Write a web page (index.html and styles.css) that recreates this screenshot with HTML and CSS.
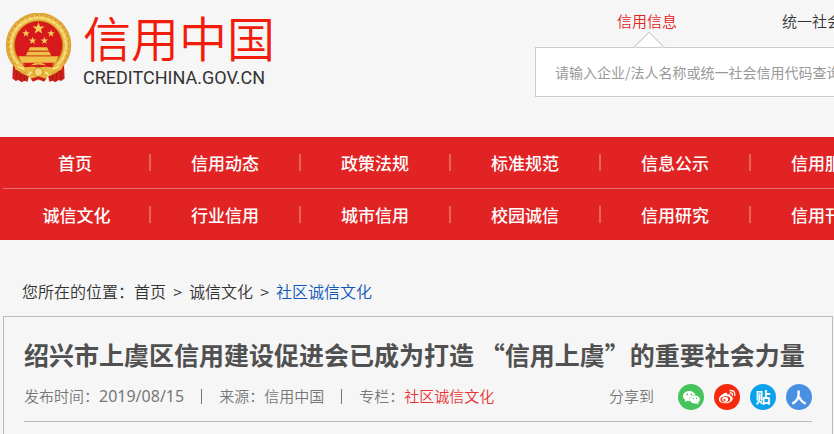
FILE: index.html
```html
<!DOCTYPE html>
<html lang="zh-CN">

<head>
    <meta charset="UTF-8">
    <meta name="viewport" content="width=device-width, initial-scale=1.0">
    <title>信用中国</title>
    <link rel="stylesheet" href="styles.css">
</head>

<body>
    <header class="header">
        <a href="#" class="logo">
            <svg class="emblem" viewBox="0 0 202 212" aria-hidden="true">
                <defs>
                    <radialGradient id="gold" cx="50%" cy="50%" r="50%">
                        <stop offset="70%" stop-color="#d99a1c" />
                        <stop offset="84%" stop-color="#f3cf62" />
                        <stop offset="100%" stop-color="#d89c2a" />
                    </radialGradient>
                    <path id="star" d="M0-10 2.4-3.2 9.5-3.1 3.8 1.2 5.9 8.1 0 4 -5.9 8.1 -3.8 1.2 -9.5-3.1 -2.4-3.2z" />
                </defs>
                <!-- drapes -->
                <path d="M24 150 22 198 32 206 40 203 50 210 58 205 68 208 74 180 128 180 134 208 144 205 152 210 162 203 170 206 180 198 178 150z" fill="#cf1f1b" />
                <path d="M34 165v36M46 170v34M58 174v30M144 174v30M156 170v34M168 165v36" stroke="#a81a16" stroke-width="3" />
                <!-- wheat ring -->
                <circle cx="101" cy="98" r="99" fill="url(#gold)" />
                <circle cx="101" cy="98" r="91" fill="none" stroke="#cf932a" stroke-width="4" stroke-dasharray="6 9" />
                <circle cx="101" cy="98" r="83" fill="none" stroke="#fbe08a" stroke-width="5" stroke-dasharray="12 6" />
                <circle cx="101" cy="98" r="73" fill="none" stroke="#c4861c" stroke-width="3" />
                <circle cx="101" cy="97" r="72" fill="#d8191b" />
                <g fill="#f5cd58">
                    <use href="#star" transform="translate(101 47) scale(1.9)" />
                    <use href="#star" transform="translate(63 62) scale(1.2)" />
                    <use href="#star" transform="translate(139 62) scale(1.2)" />
                    <use href="#star" transform="translate(83 84) scale(1.2)" />
                    <use href="#star" transform="translate(119 84) scale(1.2)" />
                </g>
                <!-- gate -->
                <path d="M75 104h52l5 10H70zM68 117h66l5 12H63zM40 131h122l-10 20H50z" fill="#f0c04a" />
                <path d="M72 115h58M64 130h74" stroke="#b97812" stroke-width="2" />
                <!-- gear and ribbon -->
                <path d="M28 150Q60 170 78 158 90 148 101 150 112 148 124 158 142 170 174 150L171 172Q148 180 138 176L142 186 128 192 124 204H78L74 192 60 186 64 176Q54 180 31 172z" fill="#e9b840" />
                <path d="M52 156Q84 160 101 156 118 160 150 156L142 164Q118 161 101 165 84 161 60 164z" fill="#cf1f1b" />
                <circle cx="101" cy="179" r="13" fill="#f6d777" stroke="#c4861c" stroke-width="3" />
                <path d="M70 188 80 178M132 188l-10-10M38 162l20 8M164 162l-20 8" stroke="#fff0ac" stroke-width="4" />
                <path d="M78 198 101 192 124 198 118 208 101 201 84 208z" fill="#cf1f1b" />
            </svg>
            <span class="logo-text">
                <span class="logo-name">信用中国</span>
                <span class="logo-domain">CREDITCHINA.GOV.CN</span>
            </span>
        </a>
        <form class="search">
            <div class="search-tabs">
                <a href="#" class="search-tab active">信用信息</a>
                <a href="#" class="search-tab">统一社会信用代码</a>
            </div>
            <input type="text" class="search-input" aria-label="信用信息" placeholder="请输入企业/法人名称或统一社会信用代码查询">
        </form>
    </header>

    <nav class="nav">
        <ul class="nav-row">
            <li><a href="#">首页</a></li>
            <li><a href="#">信用动态</a></li>
            <li><a href="#">政策法规</a></li>
            <li><a href="#">标准规范</a></li>
            <li><a href="#">信息公示</a></li>
            <li><a href="#">信用服务</a></li>
        </ul>
        <ul class="nav-row">
            <li><a href="#">诚信文化</a></li>
            <li><a href="#">行业信用</a></li>
            <li><a href="#">城市信用</a></li>
            <li><a href="#">校园诚信</a></li>
            <li><a href="#">信用研究</a></li>
            <li><a href="#">信用刊物</a></li>
        </ul>
    </nav>

    <div class="breadcrumb">
        <span>您所在的位置：</span><a href="#">首页</a>
        <span class="arrow">&gt;</span>
        <a href="#">诚信文化</a>
        <span class="arrow">&gt;</span>
        <a href="#" class="current">社区诚信文化</a>
    </div>

    <main class="article">
        <h1>绍兴市上虞区信用建设促进会已成为打造 “信用上虞”的重要社会力量</h1>
        <div class="article-info">
            <div class="meta">
                <span>发布时间：<time>2019/08/15</time></span>
                <span class="line"></span>
                <span>来源：信用中国</span>
                <span class="line"></span>
                <span>专栏：<a href="#">社区诚信文化</a></span>
            </div>
            <div class="share">
                <span class="share-label">分享到</span>
                <a href="#" aria-label="微信">
                    <svg viewBox="0 0 26 26">
                        <circle cx="13" cy="13" r="13" fill="#46c45c" />
                        <path d="M11.2 7C7.800 7 5 9.200 5 12c0 1.600.9 3 2.300 3.900L6.800 17.900l2.300-1.200c.7.200 1.400.3 2.100.3h.5c-.7-3.500 2.200-6 5.700-6C16.900 8.700 14.300 7 11.200 7z" fill="#fff" />
                        <path d="M16.900 11.600c-2.800 0-5 1.800-5 4s2.200 4 5 4c.6 0 1.200-.1 1.700-.2l1.900 1-.5-1.700c1.200-.7 1.900-1.800 1.900-3.100 0-2.200-2.200-4-5-4z" fill="#fff" />
                        <g fill="#46c45c">
                            <circle cx="9.100" cy="10.300" r=".9" />
                            <circle cx="13.300" cy="10.300" r=".9" />
                            <circle cx="15.200" cy="14.500" r=".7" />
                            <circle cx="18.600" cy="14.500" r=".7" />
                        </g>
                    </svg>
                </a>
                <a href="#" aria-label="微博">
                    <svg viewBox="0 0 26 26">
                        <circle cx="13" cy="13" r="13" fill="#f6290c" />
                        <path d="M10.800 9c1.600-.7 2.800-.1 2.400 1.600 1.900-.8 3.800-.6 3.200 1.400 1.600.5 2.500 1.400 2.400 2.700-.2 2.500-3.500 4.600-7.400 4.600-3.800 0-6.600-1.700-6.600-4.100C4.800 12.900 7.900 10.200 10.800 9z" fill="#fff" />
                        <ellipse cx="11.400" cy="15.300" rx="4.900" ry="3" fill="#f6290c" transform="rotate(-7 11.400 15.300)" />
                        <ellipse cx="11.200" cy="15.500" rx="3" ry="2.400" fill="#fff" />
                        <circle cx="10.500" cy="16" r="1.100" fill="#f6290c" />
                        <path d="M16 6.600c3.400-.6 5.600 2 4.700 5M16.200 9c1.600-.2 2.600.8 2.200 2.300" fill="none" stroke="#fff" stroke-width="1.300" stroke-linecap="round" />
                    </svg>
                </a>
                <a href="#" class="tieba">贴</a>
                <a href="#" aria-label="人人网">
                    <svg viewBox="0 0 26 26">
                        <circle cx="13" cy="13" r="13" fill="#4a90e2" />
                        <path d="M12.600 6.400V10C12.600 14.500 10 17.800 6.300 19.600M13 12.500c1.100 3.400 3.300 5.700 6.700 7.100" fill="none" stroke="#fff" stroke-width="2.400" />
                    </svg>
                </a>
            </div>
        </div>
    </main>
</body>

</html>
```
FILE: styles.css
```css
* {
    box-sizing: border-box;
}

body {
    margin: 0;
    font-family: "Noto Sans CJK SC", "Noto Sans", sans-serif;
    background: #f6f6f6;
    color: #333;
    overflow-x: hidden;
}

a {
    color: inherit;
    text-decoration: none;
}

/* header */
.header {
    display: flex;
    align-items: flex-start;
    height: 137px;
    padding-left: 5px;
    overflow: hidden;
}

.logo {
    display: flex;
    flex: none;
    gap: 11px;
    width: 530px;
    padding-top: 13px;
}

.emblem {
    width: 67px;
    height: 70px;
}

.logo-text {
    display: flex;
    flex-direction: column;
    gap: 8px;
}

.logo-name {
    font-size: 48px;
    font-weight: 350;
    line-height: 46px;
    color: #f21b0c;
}

.logo-domain {
    font-family: Roboto, sans-serif;
    font-size: 18px;
    line-height: 22px;
}

.search {
    flex: 0 0 600px;
}

.search-tabs {
    display: flex;
    gap: 105px;
    height: 47px;
    padding-left: 82px;
    font-size: 15px;
    font-weight: 350;
    line-height: 42px;
}

.search-tab {
    position: relative;
    white-space: nowrap;
}

.search-tab.active {
    color: #e22323;
}

.search-tab.active::after {
    content: "";
    position: absolute;
    left: 50%;
    bottom: -11px;
    width: 20px;
    height: 20px;
    margin-left: -9px;
    background: linear-gradient(135deg, #fff 50%, transparent 50%);
    border: 1px solid #ccc;
    border-right-color: transparent;
    border-bottom-color: transparent;
    transform: rotate(45deg);
    z-index: 1;
}

.search-input {
    display: block;
    width: 100%;
    height: 50px;
    padding: 0 19px;
    border: 1px solid #ccc;
    background: #fff;
    font-family: inherit;
    font-size: 14px;
    outline: none;
}

.search-input::placeholder {
    color: #999;
}

/* navigation */
.nav {
    background: #e22323;
    color: #fff;
    overflow: hidden;
}

.nav-row {
    display: flex;
    height: 51px;
    margin: 0;
    padding: 0;
    list-style: none;
}

.nav-row + .nav-row {
    height: 52px;
    margin-left: 3px;
    border-top: 1px solid #ec7070;
}

.nav-row li {
    display: flex;
    flex: 0 0 150px;
    align-items: center;
    justify-content: center;
    position: relative;
    font-size: 17px;
    font-weight: 500;
}

.nav-row + .nav-row li:first-child {
    flex-basis: 147px;
}

.nav-row li::after {
    content: "";
    position: absolute;
    right: -1px;
    width: 2px;
    height: 17px;
    background: #eb6450;
}

/* breadcrumb */
.breadcrumb {
    display: flex;
    height: 76px;
    padding: 28px 22px 0;
    font-size: 16px;
    font-weight: 350;
    line-height: 46px;
}

.arrow {
    width: 23px;
    text-align: center;
}

.current {
    color: #1058b8;
}

/* article */
.article {
    margin: 0 1px 0 3px;
    padding: 18px 20px 12px;
    border: 1px solid #bbb;
    border-bottom: none;
}

.article h1 {
    margin: 0;
    font-size: 25px;
    line-height: 38px;
    color: #505050;
    white-space: nowrap;
}

.article-info {
    display: flex;
    align-items: center;
    justify-content: space-between;
    height: 49px;
    border-bottom: 1px solid #bbb;
    font-size: 15px;
    font-weight: 350;
    line-height: 22px;
    color: #777;
}

.meta {
    display: flex;
    align-items: center;
    gap: 17px;
    padding-bottom: 2px;
}

.meta time {
    font-family: "Noto Sans", sans-serif;
    font-size: 16px;
    font-weight: 400;
}

.meta a {
    color: #e83434;
}

.line {
    width: 1px;
    height: 15px;
    background: #777;
}

.share {
    display: flex;
    align-items: center;
    gap: 10px;
}

.share-label {
    margin-right: 14px;
    padding-bottom: 2px;
}

.share a,
.share svg {
    display: block;
    width: 26px;
    height: 26px;
}

.share .tieba {
    border-radius: 50%;
    background: #0aa1ec;
    color: #fff;
    font-size: 15px;
    font-weight: 700;
    line-height: 26px;
    text-align: center;
}
```
